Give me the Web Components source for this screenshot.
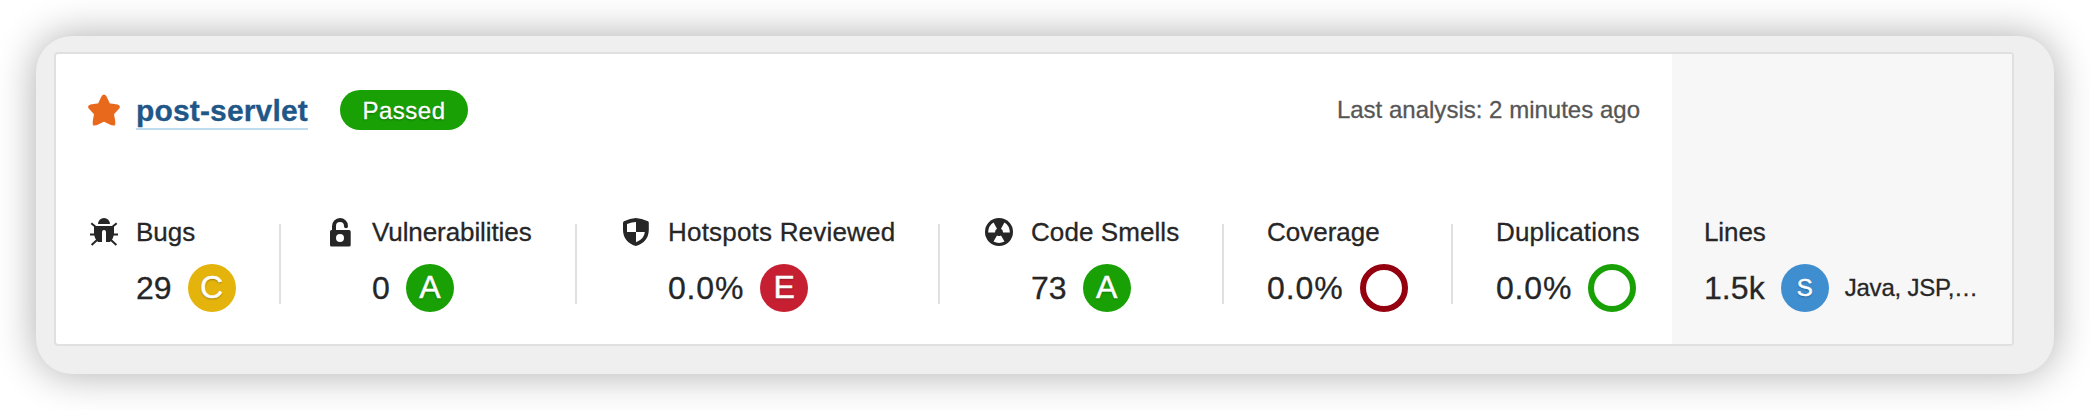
<!DOCTYPE html>
<html lang="en">
<head>
<meta charset="utf-8">
<title>post-servlet</title>
<style>
html,body{margin:0;height:100%;background:#fff;overflow:hidden}
body{font-family:"Liberation Sans",Arial,sans-serif;color:#262626;-webkit-text-stroke:.3px currentColor}
</style>
</head>
<body>
<project-frame>
  <project-card>
    <project-title slot="head">post-servlet</project-title>
    <quality-gate slot="head">Passed</quality-gate>
    <span slot="date">Last analysis: 2 minutes ago</span>
    <metric-item slot="metric" icon="bug" label="Bugs" value="29" style="width:148px"><rating-badge style="--c:#e4b30c">C</rating-badge></metric-item>
    <metric-item slot="metric" icon="lock" label="Vulnerabilities" value="0" style="width:208px;--ls:-.09px"><rating-badge style="--c:#18a005">A</rating-badge></metric-item>
    <metric-item slot="metric" icon="shield" label="Hotspots Reviewed" value="0.0%" style="width:275px;--ls:.2px;--vs:.8px"><rating-badge style="--c:#c71f32">E</rating-badge></metric-item>
    <metric-item slot="metric" icon="smell" label="Code Smells" value="73" style="width:196px;--ls:.08px"><rating-badge style="--c:#18a005">A</rating-badge></metric-item>
    <metric-item slot="metric" label="Coverage" value="0.0%" style="width:141px;--vs:.95px"><ring-badge style="--c:#94000f"></ring-badge></metric-item>
    <metric-item slot="metric" label="Duplications" value="0.0%" style="width:144px;--ls:.16px;--vs:.8px"><ring-badge style="--c:#18a005"></ring-badge></metric-item>
    <metric-item slot="side" label="Lines" value="1.5k" style="--ls:-.1px;--vs:.05px"><rating-badge style="--c:#3f8ecf;--s:24px">S</rating-badge><language-list>Java, JSP,…</language-list></metric-item>
  </project-card>
</project-frame>
<script>
const define = (name, html, setup) => {
  const t = document.createElement('template');
  t.innerHTML = html;
  customElements.define(name, class extends HTMLElement {
    constructor() {
      super();
      this.attachShadow({mode: 'open'}).append(t.content.cloneNode(true));
    }
    connectedCallback() { if (setup) setup(this, this.shadowRoot); }
  });
};

const ICONS = {
  bug: `<path d="M8 8A6 6 0 0 1 20 8zM4 10H24V17Q24 22 20 26H16V16Q16 14 14 14Q12 14 12 16V26H8Q4 22 4 17z" transform="translate(2 0)"/>
    <path fill="none" stroke="currentColor" stroke-width="2" d="M3.3 7.2L7.5 10.8M28.7 7.2L24.5 10.8M2 18.6H7M25 18.6H30M3.6 29L9 24M28.4 29L23 24"/>`,
  lock: `<path fill="none" stroke="currentColor" stroke-width="4" stroke-linecap="round" d="M10 15V10.2A6 6 0 0 1 22 10V10.3"/>
    <path fill-rule="evenodd" d="M7.5 14H25Q26.7 14 26.7 15.7V29Q26.7 30.6 25 30.6H7.5Q6 30.6 6 29V15.7Q6 14 7.5 14zM16 18A4 4 0 1 0 16 26A4 4 0 1 0 16 18z"/>`,
  shield: `<path fill-rule="evenodd" d="M15.8 2Q21.5 2.6 28 5.2Q28.9 5.7 28.8 7V14Q28.5 26 15.8 30Q3.3 26 3 14V7Q3 5.7 4 5.2Q10 2.6 15.8 2zM16 6Q12 6.2 7 8V16H16zM16 16V26.2Q24.4 23 24.8 16z"/>`,
  smell: `<circle cx="16" cy="16" r="14"/>
    <path fill="#fff" d="M5.1 16.6H12A4.2 4.2 0 0 1 14 12.8L10.6 6.6Q5.3 9.7 5.1 16.6zM26.9 16.6H20A4.2 4.2 0 0 0 18 12.8L21.4 6.6Q26.7 9.7 26.9 16.6zM10.5 25.6L14 19.6Q16 20.6 18 19.6L21.5 25.6Q16 28.5 10.5 25.6z"/>`
};

define('project-frame', `<style>
:host{display:block;box-sizing:border-box;margin:36px 36px 0;height:338px;padding:16px 40px 28px 18px;border-radius:36px;background:#efefef;box-shadow:0 0 40px rgba(0,0,0,.33)}
</style><slot></slot>`);

define('project-card', `<style>
:host{display:flex;box-sizing:border-box;height:294px;border:2px solid #e0e0e0;border-radius:4px;background:#fff;overflow:hidden}
main{flex:1;display:flex;flex-direction:column;padding:36px 32px 0}
header{display:flex;align-items:center;height:40px}
.date{margin-left:auto;font-size:24px;letter-spacing:.01px;color:#565656}
section{display:flex;justify-content:space-between;margin-top:86px}
aside{box-sizing:border-box;width:340px;padding:162px 0 0 32px;background:#f7f7f7}
</style>
<main><header><slot name="head"></slot><span class="date"><slot name="date"></slot></span></header>
<section><slot name="metric"></slot></section></main>
<aside><slot name="side"></slot></aside>`, (host) => {
  const items = [...host.querySelectorAll('[slot=metric]')];
  items.slice(1).forEach(item => {
    const line = document.createElement('metric-divider');
    line.slot = 'metric';
    item.before(line);
  });
});

define('metric-divider', `<style>:host{display:block;width:2px;height:80px;margin-top:8px;background:#e0e0e0}</style>`);

define('project-title', `<style>
:host{display:flex;align-items:center;gap:16px}
svg{width:32px;height:32px;fill:#e8691c;display:block}
a{display:block;box-sizing:border-box;width:172px;height:36px;margin-top:4px;line-height:33px;font-size:30px;font-weight:700;letter-spacing:.15px;color:#1f5788;border-bottom:2px solid #bddcf2;white-space:nowrap}
</style>
<svg viewBox="0 0 32 32"><path stroke="#e8691c" stroke-width="2" stroke-linejoin="round" d="M14.2 3.2Q16 0 17.8 3.2L21.1 10.2L29.5 11.6Q31.8 12.2 30.3 14L25 19.8L26.3 27.8L26.2 30.4L23.8 30.3L16 26.5L8.2 30.3L5.8 30.4L5.7 27.8L7 19.8L1.7 14Q.2 12.2 2.5 11.6L10.9 10.2z"/></svg>
<a><slot></slot></a>`);

define('quality-gate', `<style>
:host{display:block;width:128px;height:40px;margin-left:32px;border-radius:20px;background:#18a005;color:#fff;-webkit-text-stroke-color:#fff;font-size:24px;line-height:41px;letter-spacing:.5px;text-align:center;text-shadow:0 1px 2px rgba(0,0,0,.35)}
</style><slot></slot>`);

define('metric-item', `<style>
:host{display:flex;gap:16px}
svg{width:32px;height:32px;flex:none;fill:currentColor;display:block}
.label{height:32px;line-height:33px;font-size:26px;letter-spacing:var(--ls,0);white-space:nowrap}
.value{display:flex;align-items:center;height:48px;margin-top:16px}
.n{margin-right:16px;font-size:32px;line-height:48px;letter-spacing:var(--vs,0)}
</style>
<div><div class="label"></div><div class="value"><span class="n"></span><slot></slot></div></div>`, (host, root) => {
  const icon = ICONS[host.getAttribute('icon')];
  if (icon) root.querySelector('div').insertAdjacentHTML('beforebegin', `<svg viewBox="0 0 32 32">${icon}</svg>`);
  root.querySelector('.label').textContent = host.getAttribute('label');
  root.querySelector('.n').textContent = host.getAttribute('value');
});

define('rating-badge', `<style>
:host{display:block;flex:none;width:48px;height:48px;border-radius:50%;background:var(--c);color:#fff;-webkit-text-stroke:.5px #fff;font-size:var(--s,32px);line-height:47px;text-align:center;text-shadow:0 1px 2px rgba(0,0,0,.35)}
</style><slot></slot>`);

define('ring-badge', `<style>
:host{display:block;box-sizing:border-box;flex:none;width:48px;height:48px;border-radius:50%;border:6px solid var(--c)}
</style>`);

define('language-list', `<style>
:host{display:block;margin-left:16px;font-size:24px;line-height:48px;white-space:nowrap;letter-spacing:-.22px}
</style><slot></slot>`);
</script>
</body>
</html>
